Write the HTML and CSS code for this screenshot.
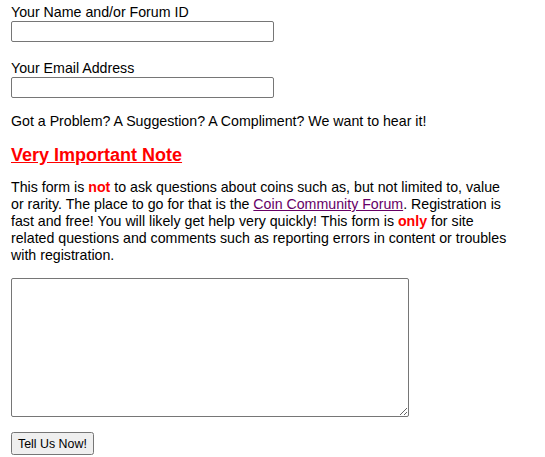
FILE: index.html
```html
<!DOCTYPE html>
<html>

<head>
	<link rel="stylesheet" href="styles.css">
</head>

<body>
	<form class="contact-form" novalidate>
		<div class="form-group">
			<label for="name">Your Name and/or Forum ID</label>
			<input type="text" id="name" name="name">
		</div>

		<div class="form-group form-group-last">
			<label for="email">Your Email Address</label>
			<input type="email" id="email" name="email">
		</div>

		<p class="intro">Got a Problem? A Suggestion? A Compliment? We want to hear it!</p>

		<h2 class="note-title">Very Important Note</h2>

		<p class="note">This form is <strong>not</strong> to ask questions about coins such as, but not limited to, value or rarity. The place to go for that is the <a href="#forum">Coin Community Forum</a>. Registration is fast and free! You will likely get help very quickly! This form is <strong>only</strong> for site related questions and comments such as reporting errors in content or troubles with registration.</p>

		<textarea name="message" class="message"></textarea>

		<div class="actions">
			<button type="submit">Tell Us Now!</button>
		</div>
	</form>
</body>

</html>
```

FILE: styles.css
```css
body {
	margin: 0;
	padding: 4px 11px;
	font-family: 'Liberation Sans', Arial, sans-serif;
	font-size: 14.2px;
	line-height: 17px;
	color: #000;
	background: #fff;
}

.contact-form {
	width: 502px;
}

.form-group {
	margin-bottom: 18px;
}

.form-group-last {
	margin-bottom: 15px;
}

label {
	display: block;
}

input {
	display: block;
	width: 263px;
	height: 21px;
	box-sizing: border-box;
	margin: 0;
	border: 1px solid #767676;
	border-radius: 2px;
	font-size: 12.4px;
}

.intro {
	margin: 0 0 15px;
}

.note-title {
	margin: 0 0 13px;
	font-size: 18px;
	line-height: 21px;
	color: #ff0000;
	text-decoration: underline;
}

.note {
	margin: 0 0 14px;
}

.note strong {
	color: #ff0000;
}

.note a {
	color: #660066;
}

.message {
	display: block;
	width: 398px;
	height: 139px;
	box-sizing: border-box;
	margin: 0 0 15px;
	border: 1px solid #767676;
	border-radius: 2px;
}

button {
	height: 23px;
	padding: 0 5px;
	font-family: 'Liberation Sans', Arial, sans-serif;
	font-size: 12.4px;
}
```
